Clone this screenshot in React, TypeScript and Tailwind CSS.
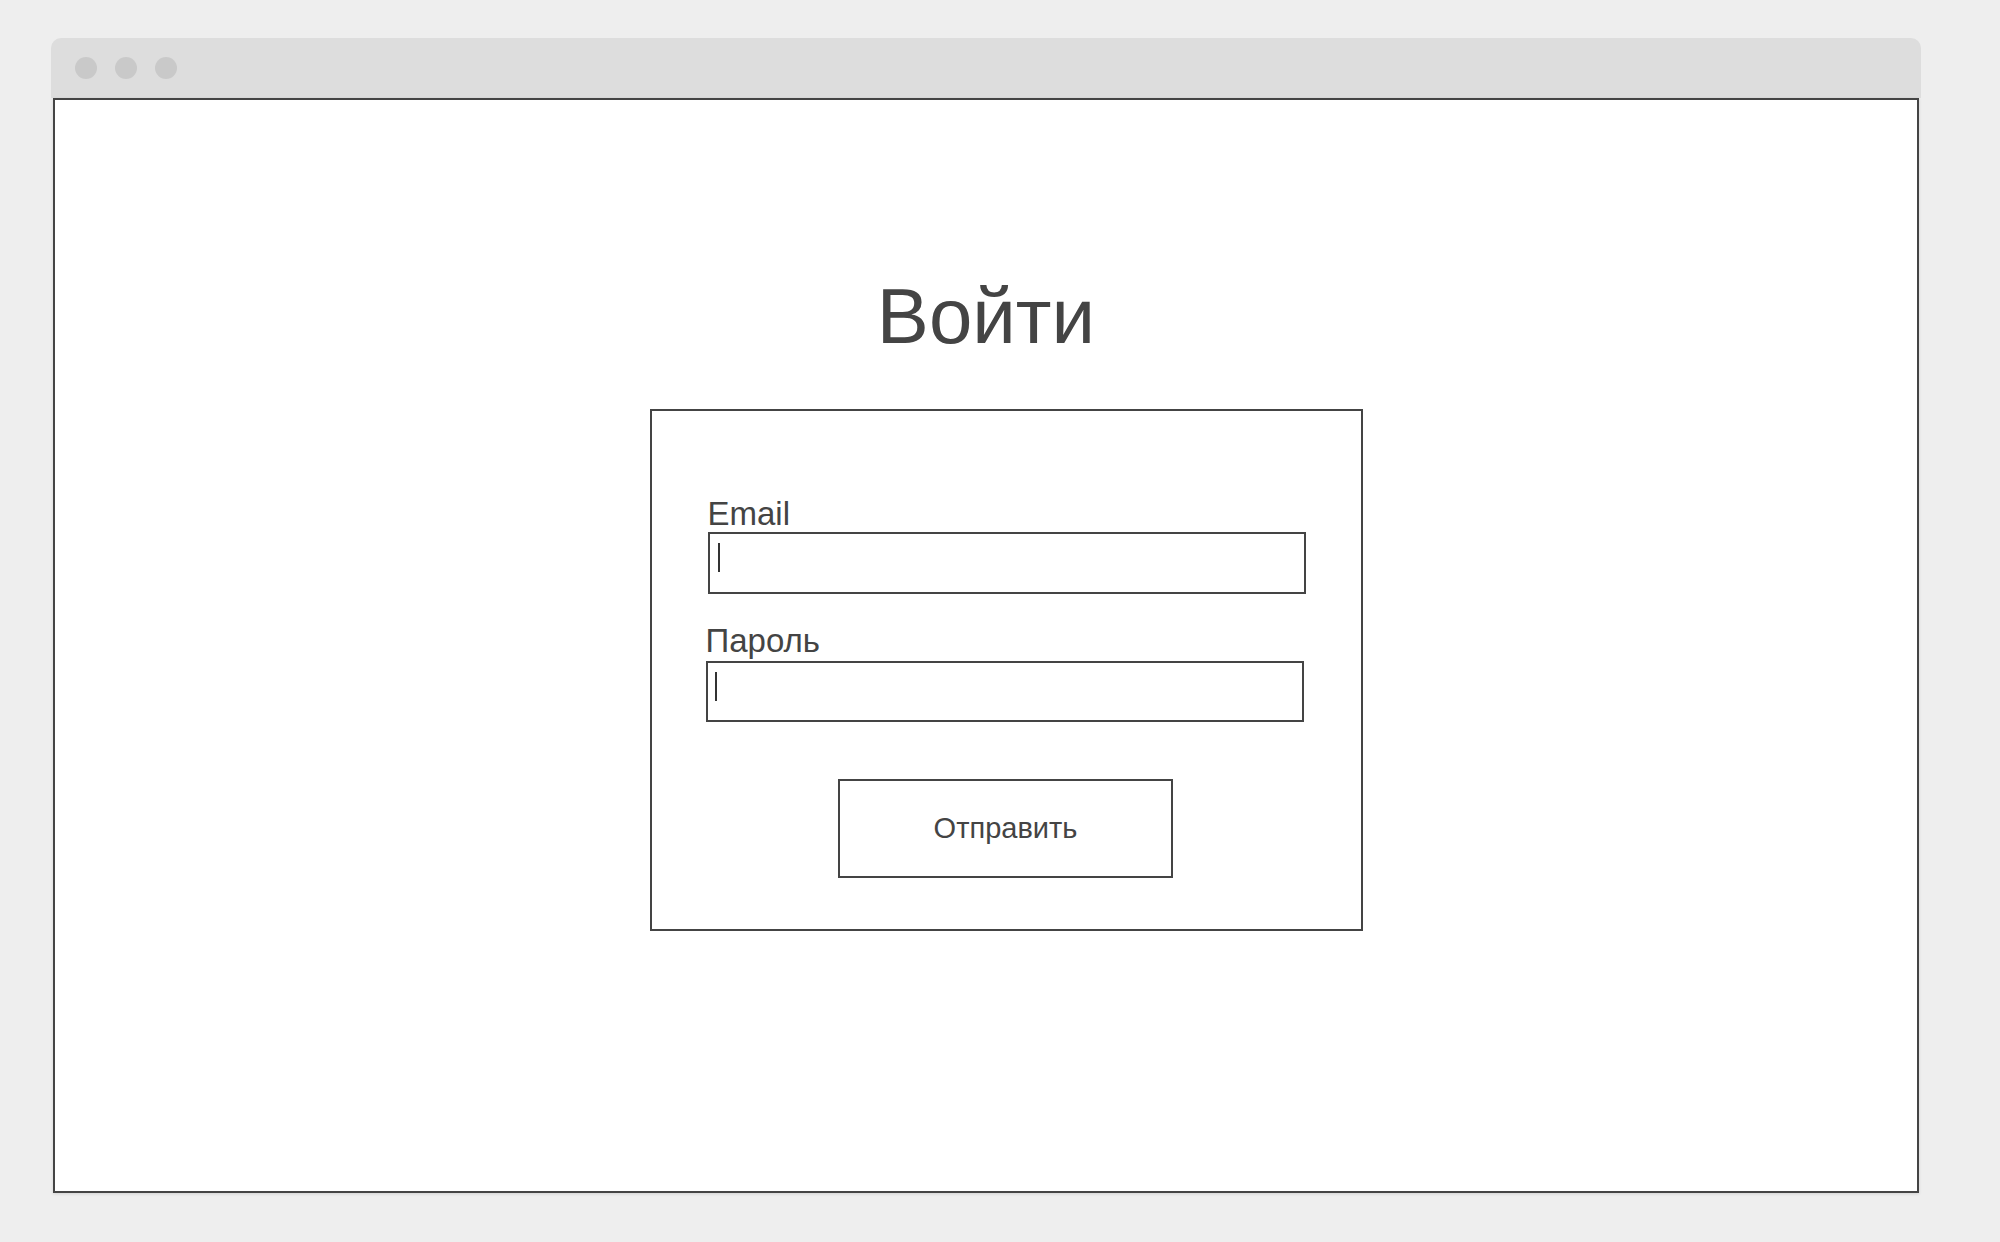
import React, { useState } from "react";

// Wireframe of a simple login window
const Field = ({
  label,
  name,
  type,
  value,
  onChange,
  labelGap,
  height,
  caretLeft,
}: {
  label: string;
  name: string;
  type: string;
  value: string;
  onChange: (e: React.ChangeEvent<HTMLInputElement>) => void;
  labelGap: string;
  height: string;
  caretLeft: string;
}) => (
  <div className="flex flex-col">
    <label htmlFor={name} className={`text-[33px] leading-none text-[#444444] ${labelGap}`}>
      {label}
    </label>
    <div className={`relative w-[598px] ${height} border-2 border-[#444444] bg-white`}>
      <input
        id={name}
        name={name}
        type={type}
        value={value}
        onChange={onChange}
        className="w-full h-full bg-transparent outline-none px-3 text-[22px] text-[#444444]"
      />
      {value === "" && (
        <span className={`absolute ${caretLeft} top-[9px] w-[2px] h-[29px] bg-[#333333] pointer-events-none`} />
      )}
    </div>
  </div>
);

const App = () => {
  const [form, setForm] = useState({ email: "", password: "" });

  const handleChange = (event: React.ChangeEvent<HTMLInputElement>) => {
    const { name, value } = event.target;
    setForm({ ...form, [name]: value });
  };

  const handleSubmit = (event: React.FormEvent<HTMLFormElement>) => {
    event.preventDefault();
  };

  return (
    <div className="min-h-screen bg-[#eeeeee] pt-[38px] pl-[51px] font-['Liberation_Sans',Arial,sans-serif]">
      <div className="w-[1870px]">
        {/* title bar */}
        <div className="h-[60px] bg-[#dddddd] rounded-t-[10px] flex items-center pl-[24px] gap-[18px]">
          <span className="w-[22px] h-[22px] rounded-full bg-[#c9c9c9]" />
          <span className="w-[22px] h-[22px] rounded-full bg-[#c9c9c9]" />
          <span className="w-[22px] h-[22px] rounded-full bg-[#c9c9c9]" />
        </div>

        {/* page */}
        <div className="mx-[2px] h-[1095px] border-2 border-[#444444] bg-white shadow-[0_1px_3px_rgba(0,0,0,0.12)] flex flex-col items-center pt-[177px]">
          <h1 className="text-[78px] leading-none text-[#444444]">Войти</h1>

          <form
            onSubmit={handleSubmit}
            className="mt-[54px] ml-[40px] w-[713px] border-2 border-[#444444] pt-[86px] pb-[51px] pl-[56px] flex flex-col"
          >
            <Field
              label="Email"
              name="email"
              type="email"
              value={form.email}
              onChange={handleChange}
              labelGap="mb-[2px]"
              height="h-[62px]"
              caretLeft="left-[8px]"
            />
            <div className="mt-[30px] -ml-[2px]">
              <Field
                label="Пароль"
                name="password"
                type="password"
                value={form.password}
                onChange={handleChange}
                labelGap="mb-[4px]"
                height="h-[61px]"
                caretLeft="left-[7px]"
              />
            </div>
            <div className="mt-[57px] w-[596px] flex justify-center">
              <button
                type="submit"
                className="w-[335px] h-[99px] border-2 border-[#444444] bg-white text-[29px] text-[#444444]"
              >
                Отправить
              </button>
            </div>
          </form>
        </div>
      </div>
    </div>
  );
};

export default App;
